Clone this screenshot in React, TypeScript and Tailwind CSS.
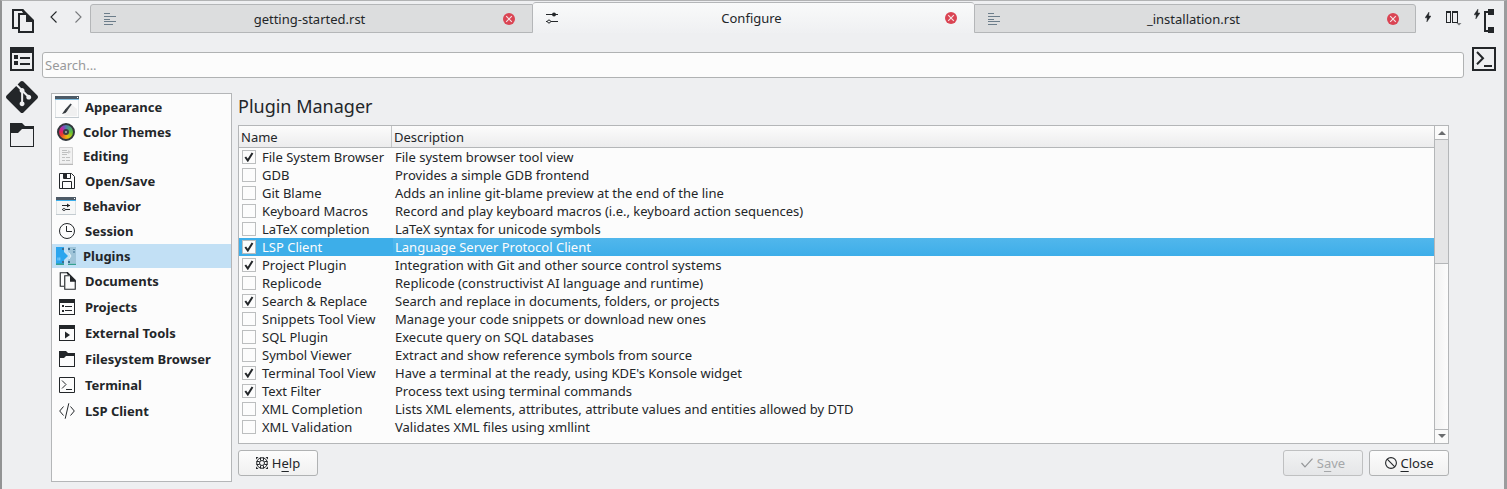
import type { ReactNode } from "react";
import { SiGit } from "react-icons/si";

const INK = "#232629";

function DocsIcon({ size, thin }: { size: number; thin?: boolean }) {
  const w = thin ? 1.5 : 2;
  return (
    <svg width={size} height={size} viewBox="0 0 24 24" fill="none" stroke={INK} strokeWidth={w}>
      <path d="M8 19H3V1H12.5L14 3" />
      <path d="M11 0h2l4 4h-4z" fill={INK} stroke="none" />
      <path d="M17 5H9V23H23V12" />
      <path d="M16 4h1l7 7v2h-8z" fill={INK} stroke="none" />
    </svg>
  );
}

function ListIcon() {
  return (
    <svg width="24" height="24" viewBox="0 0 24 24" fill={INK} shapeRendering="crispEdges">
      <path d="M0 0h24v24H0zM2 6v16h20V6z" fillRule="evenodd" />
      <path d="M4 8h4v4H4zM10 10h10v2H10zM4 14h4v4H4zM10 16h10v2H10z" />
    </svg>
  );
}

function FolderIcon() {
  return (
    <svg width="24" height="24" viewBox="0 0 24 24" fill={INK}>
      <path d="M0 0h12l3 3h9v21H0zM1 10v13h22V6H12l-4 4z" fillRule="evenodd" />
    </svg>
  );
}

function Bolt() {
  return (
    <svg width="6" height="10" viewBox="0 0 6 10" fill={INK}>
      <path d="M4 0L0 5.8h2.2L1.8 10L6 4H3.800z" stroke={INK} strokeWidth=".4" />
    </svg>
  );
}

function TreeIcon() {
  return (
    <svg width="10" height="24" viewBox="0 0 10 24" fill={INK} shapeRendering="crispEdges">
      <path d="M4 0h6v6H4zM4 18h6v6H4zM0 2h4v2H2v17h2v2H0z" />
    </svg>
  );
}

function TermIcon() {
  return (
    <svg width="24" height="24" viewBox="0 0 24 24" fill="none" stroke={INK} strokeWidth="2">
      <rect x="1" y="1" width="22" height="22" />
      <path d="M5 5l6 6.3L5 17.2" />
      <path d="M12 19h8" />
    </svg>
  );
}

function TextIcon() {
  return (
    <svg width="12" height="12" viewBox="0 0 12 12" fill="#6c7d8a" shapeRendering="crispEdges">
      <path d="M0 0h6v1H0zM0 3h12v1H0zM0 6h6v1H0zM0 8h12v1H0zM0 11h9v1H0z" />
    </svg>
  );
}

function SlidersIcon() {
  return (
    <svg width="12" height="12" viewBox="0 0 12 12" fill="none" stroke={INK}>
      <path d="M0 2.5h12M5 9.5h7M0 9.5h1" />
      <circle cx="8" cy="2.5" r="2" fill={INK} stroke="none" />
      <circle cx="3" cy="9.5" r="1.5" />
    </svg>
  );
}

function CloseDot() {
  return (
    <svg width="12" height="12" viewBox="0 0 12 12">
      <circle cx="6" cy="6" r="6" fill="#da4453" />
      <path d="M3.2 3.2l5.6 5.6M8.8 3.2l-5.6 5.6" stroke="#f6e4e6" strokeWidth="1.1" />
    </svg>
  );
}

function Tab({ label, active, className }: { label: string; active?: boolean; className: string }) {
  return (
    <div className={`flex items-center ${className}`}>
      {active ? <SlidersIcon /> : <TextIcon />}
      <span className="flex-1 text-center">{label}</span>
      <CloseDot />
    </div>
  );
}

const appearance = (
  <svg width="24" height="22" viewBox="0 0 24 22">
    <path d="M0 1h24v21H0z" fill="#c3cbd0" />
    <path d="M.5 3h23v18H.5z" fill="#fbfbfb" />
    <path d="M0 0h24v3H0z" fill="#4d5a66" />
    <path d="M0 3h24v1H0z" fill="#7fbde0" />
    <path d="M22 1h1v1h-1z" fill="#fff" />
    <path d="M10 18l7-9 5 4v7H9z" fill="#f0f0f0" />
    <path d="M15.500 7.500l1.300 1-4.800 6.500-1.900-1.400z" fill="#3a4045" />
    <path d="M10.500 13l2 1.700-2 2.200-3.500 1z" fill="#33383c" />
  </svg>
);

const editing = (
  <svg width="14" height="18" viewBox="0 0 14 18">
    <path d="M.5.5h13v16.500H.5z" fill="#f1f1f1" stroke="#d2d2d2" />
    <path d="M0 17h14v1H0z" fill="#b9b9b9" />
    <path d="M3 3.500h5M3 5.500h6M3 7.500h5M3 10.500h3M7 10.500h4M3 13.500h3M7 13.500h4" stroke="#bfc0c0" />
    <path d="M9 3l3 2-3 2z" fill="#cfcfcf" />
  </svg>
);

const save = (
  <svg width="16" height="16" viewBox="0 0 16 16" fill="none" stroke={INK}>
    <path d="M.5.5h12l3 3v12H.5z" />
    <path d="M3.500 15.500v-7h9v7" />
    <path d="M4.500 0v5.500h7V0" />
    <path d="M5 1h3v4H5z" fill={INK} stroke="none" />
  </svg>
);

const behavior = (
  <svg width="20" height="18" viewBox="0 0 20 18">
    <path d="M0 0h20v18H0z" fill="#c3cbd0" />
    <path d="M.5 3h19v14H.5z" fill="#f6f7f7" />
    <path d="M0 0h20v3H0z" fill="#4d5a66" />
    <path d="M0 3h20v1H0z" fill="#3daee9" />
    <path d="M18 1h1v1h-1z" fill="#fff" />
    <path d="M6 8.500h8M6 12.500h8" stroke={INK} />
    <path d="M11 6.500l3 2-3 2z" fill={INK} />
    <circle cx="8" cy="12.500" r="1.200" fill="#f6f7f7" stroke={INK} strokeWidth=".8" />
  </svg>
);

const session = (
  <svg width="16" height="16" viewBox="0 0 16 16" fill="none" stroke={INK}>
    <circle cx="8" cy="8" r="7.500" />
    <path d="M7.500 3v5.500H13" />
  </svg>
);

const plugins = (
  <svg width="20" height="18" viewBox="0 0 20 18">
    <path d="M0 0h8v5l4 4-4 4v5H0z" fill="#2ba5ee" />
    <path d="M0 16.500h8V18H0zM12 16.500h8V18h-8z" fill="#35a08f" />
    <path d="M20 0h-8v4l3 5-3 4v3.500h8z" fill="#9fc4d8" />
    <path d="M6 1h2v2H6zM6 14h2v2H6zM12 1h2v2h-2zM12 14h2v2h-2zM17 2h2v1h-2zM17 4.500h2v1h-2z" fill="#3b6f92" />
    <path d="M2 10.500v3M3.800 10.500v3" stroke="#a5dcff" strokeWidth=".8" />
    <path d="M13 6l2 3-2 3" stroke="#e4f2fa" fill="none" />
  </svg>
);

const projects = (
  <svg width="16" height="16" viewBox="0 0 16 16" fill={INK} shapeRendering="crispEdges">
    <path d="M0 0h16v16H0zM1 4v11h14V4z" fillRule="evenodd" />
    <path d="M3 6h2v2H3zM6 7h7v1H6zM3 11h2v2H3zM6 11h7v1H6z" />
  </svg>
);

const tools = (
  <svg width="16" height="16" viewBox="0 0 16 16" fill={INK}>
    <path d="M0 0h16v16H0zM1 4v11h14V4z" fillRule="evenodd" />
    <path d="M6 6.500l5 3.500-5 3.500z" />
  </svg>
);

const folder = (
  <svg width="16" height="16" viewBox="0 0 16 16" fill={INK}>
    <path d="M0 0h7l2 2h7v14H0zM1 7v8h14V5H7L5 7z" fillRule="evenodd" />
  </svg>
);

const terminal = (
  <svg width="16" height="16" viewBox="0 0 16 16" fill="none" stroke={INK}>
    <path d="M.5.5h15v15H.5zM3 3.500l4 4-4 4M7 12.500h6" />
  </svg>
);

const code = (
  <svg width="16" height="16" viewBox="0 0 16 16" fill="none" stroke={INK}>
    <path d="M4.500 3.500L.7 8l3.800 4.500M11.500 3.500L15.300 8l-3.800 4.500M9.800 .3L6.200 15.700" />
  </svg>
);

const wheel = (
  <span className="flex size-[18px] items-center justify-center rounded-full border-2 border-[#31363b] bg-[conic-gradient(#4f7fa8,#4aa07c_12%,#5fbf3c_25%,#a9c81e_36%,#e8c010_45%,#f08a1c_55%,#e8402c_65%,#e0205c_76%,#c02a9c_86%,#7b4fc0_94%,#4f7fa8)]">
    <span className="size-[6px] rounded-full border-2 border-[#3a3f44] bg-[#b0b4b8]" />
  </span>
);

const sidebar: { label: string; icon: ReactNode; small?: boolean; selected?: boolean }[] = [
  { label: "Appearance", icon: appearance },
  { label: "Color Themes", icon: wheel, small: true },
  { label: "Editing", icon: editing, small: true },
  { label: "Open/Save", icon: save },
  { label: "Behavior", icon: behavior, small: true },
  { label: "Session", icon: session },
  { label: "Plugins", icon: plugins, small: true, selected: true },
  { label: "Documents", icon: <DocsIcon size={18} thin /> },
  { label: "Projects", icon: projects },
  { label: "External Tools", icon: tools },
  { label: "Filesystem Browser", icon: folder },
  { label: "Terminal", icon: terminal },
  { label: "LSP Client", icon: code },
];

const rows: [boolean, string, string][] = [
  [true, "File System Browser", "File system browser tool view"],
  [false, "GDB", "Provides a simple GDB frontend"],
  [false, "Git Blame", "Adds an inline git-blame preview at the end of the line"],
  [false, "Keyboard Macros", "Record and play keyboard macros (i.e., keyboard action sequences)"],
  [false, "LaTeX completion", "LaTeX syntax for unicode symbols"],
  [true, "LSP Client", "Language Server Protocol Client"],
  [true, "Project Plugin", "Integration with Git and other source control systems"],
  [false, "Replicode", "Replicode (constructivist AI language and runtime)"],
  [true, "Search & Replace", "Search and replace in documents, folders, or projects"],
  [false, "Snippets Tool View", "Manage your code snippets or download new ones"],
  [false, "SQL Plugin", "Execute query on SQL databases"],
  [false, "Symbol Viewer", "Extract and show reference symbols from source"],
  [true, "Terminal Tool View", "Have a terminal at the ready, using KDE's Konsole widget"],
  [true, "Text Filter", "Process text using terminal commands"],
  [false, "XML Completion", "Lists XML elements, attributes, attribute values and entities allowed by DTD"],
  [false, "XML Validation", "Validates XML files using xmllint"],
];

function Row({ checked, name, desc, selected }: { checked: boolean; name: string; desc: string; selected: boolean }) {
  return (
    <div className={`flex h-[18px] items-center leading-[18px] ${selected ? "text-[#fcfcfc]" : ""}`}>
      <div className={`flex h-full w-[154px] shrink-0 items-center pl-[3px] ${selected ? "bg-[#3daee9]" : ""}`}>
        <span className="mr-[6px] flex size-[14px] items-center justify-center border border-[#bcbebf] bg-[#fcfcfc]">
          {checked && (
            <svg width="10" height="10" viewBox="0 0 10 10" fill="none" stroke={INK} strokeWidth="2">
              <path d="M1.300 5l2.500 3.500L8.500 1" />
            </svg>
          )}
        </span>
        {name}
      </div>
      <div className={`h-full flex-1 pl-[2px] ${selected ? "bg-linear-to-b from-[#51b7ec] to-[#3daee9]" : ""}`}>{desc}</div>
    </div>
  );
}

function Button({ icon, children, disabled }: { icon: ReactNode; children: ReactNode; disabled?: boolean }) {
  return (
    <div
      className={`flex h-[26px] w-20 items-center justify-center gap-1 rounded-[3px] border ${
        disabled
          ? "border-[#bfc0c1] bg-linear-to-b from-[#f1f2f3] to-[#e5e6e8] text-[#a5a7a9]"
          : "border-[#b0b2b3] bg-linear-to-b from-[#fcfcfc] to-[#f0f0f0]"
      }`}
    >
      {icon}
      <span>{children}</span>
    </div>
  );
}

function Key({ children }: { children: ReactNode }) {
  return <span className="underline decoration-1 underline-offset-[3px] [text-decoration-skip-ink:none]">{children}</span>;
}

export default function App() {
  return (
    <div className="flex h-[489px] w-[1507px] overflow-hidden border-t border-l-2 border-r-3 border-t-[#b2b3b4] border-r-[#9b9c9d] border-l-[#929394] bg-[#eeeff1] font-['Noto_Sans',sans-serif] text-[13px] leading-[18px] text-[#232629]">
      <div className="flex w-10 shrink-0 flex-col items-center pt-2">
        <DocsIcon size={24} />
        <div className="mt-[14px]"><ListIcon /></div>
        <SiGit className="mt-[10px]" size={32} color={INK} />
        <div className="mt-[10px]"><FolderIcon /></div>
      </div>

      <div className="flex w-[1422px] shrink-0 flex-col">
        <div className="flex h-8 items-end">
          <div className="flex h-8 w-12 items-center gap-[18px] pl-2">
            <svg width="7" height="12" viewBox="0 0 7 12" fill="none" stroke={INK} strokeWidth="1.100"><path d="M6.500.5L1 6l5.500 5.500" /></svg>
            <svg width="7" height="12" viewBox="0 0 7 12" fill="none" stroke="#77797c" strokeWidth="1.100"><path d="M.5.5L6 6 .5 11.500" /></svg>
          </div>
          <Tab label="getting-started.rst" className="h-[29px] w-[443px] rounded-tl-[3px] border border-[#b4b6b8] bg-[#dcddde] pr-[17px] pl-[13px]" />
          <Tab label="Configure" active className="h-[31px] w-[441px] rounded-t-[3px] border-t border-[#b4b6b8] bg-linear-to-b from-[#f9fafa] to-[#eff0f2] pr-[17px] pl-[13px]" />
          <Tab label="_installation.rst" className="h-[29px] w-[442px] rounded-tr-[3px] border border-[#b4b6b8] bg-[#dcddde] pr-4 pl-[13px]" />
          <div className="flex h-8 flex-1 items-start pt-[11px] pl-[9px]">
            <Bolt />
            <svg className="mt-[-1px] ml-[15px]" width="16" height="15" viewBox="0 0 16 15" fill={INK}>
              <path d="M0 0h5v12H0zM1 2v9h3V2zM6 0h6v12H6zM7 2v9h4V2z" fillRule="evenodd" />
              <path d="M10.500 12h5l-2.500 2.500z" fill="#77797c" />
            </svg>
          </div>
        </div>

        <div className="mt-[19px] flex h-[26px] items-center rounded-[3px] border border-[#b0b2b3] bg-[#fcfcfc] pl-[2px] text-[#98999b]">Search...</div>

        <div className="mt-[15px] flex pl-[9px]">
          <div className="h-[389px] w-[181px] border border-[#b4b6b8] bg-[#fcfcfc]">
            {sidebar.map((s) => (
              <div
                key={s.label}
                className={`flex items-center gap-[6px] pl-[3px] font-bold ${s.small ? "h-6" : "h-[26px]"} ${s.selected ? "bg-[#c2e0f5]" : ""}`}
              >
                <span className={`flex shrink-0 items-center justify-center ${s.small ? "w-[22px]" : "w-6"}`}>{s.icon}</span>
                {s.label}
              </div>
            ))}
          </div>

          <div className="ml-[6px] flex w-[1211px] flex-col">
            <div className="h-8 text-[18px] leading-[26px]">Plugin Manager</div>
            <div className="flex h-[319px] border border-[#b4b6b8] bg-[#fcfcfc]">
              <div className="flex flex-1 flex-col">
                <div className="flex h-[22px] items-center border-b border-[#b4b6b8] bg-linear-to-b from-[#fcfcfc] to-[#ececed]">
                  <div className="flex h-full w-[153px] items-center border-r border-[#c4c6c7] pl-[2px]">Name</div>
                  <div className="pl-[2px]">Description</div>
                </div>
                {rows.map(([checked, name, desc]) => (
                  <Row key={name} checked={checked} name={name} desc={desc} selected={name === "LSP Client"} />
                ))}
              </div>
              <div className="flex w-[14px] flex-col border-l border-[#b4b6b8] bg-linear-to-r from-[#f2f2f2] to-[#fcfcfc]">
                <div className="flex h-[13px] items-center justify-center bg-[#fafafa]">
                  <svg width="8" height="4" viewBox="0 0 8 4" fill="#6a6c6e"><path d="M0 4l4-4 4 4z" /></svg>
                </div>
                <div className="h-[125px] border-y border-[#b4b6b8] bg-[#e5e5e6]" />
                <div className="flex-1" />
                <div className="flex h-[14px] items-start justify-center border-t border-[#b4b6b8] bg-[#fafafa] pt-[4px]">
                  <svg width="8" height="4" viewBox="0 0 8 4" fill="#6a6c6e"><path d="M0 0l4 4 4-4z" /></svg>
                </div>
              </div>
            </div>
            <div className="mt-[6px] flex gap-[6px]">
              <Button
                icon={
                  <svg width="12" height="12" viewBox="0 0 12 12" fill="none" stroke={INK}>
                    <circle cx="6" cy="6" r="5.300" />
                    <circle cx="6" cy="6" r="2.500" />
                    <path d="M4.500 .5v3M7.500 .5v3M4.500 8.500v3M7.500 8.500v3M.5 4.500h3M.5 7.500h3M8.500 4.500h3M8.500 7.500h3" />
                    <path d="M0 0h2.500L0 2.500zM12 0H9.500L12 2.500zM0 12h2.500L0 9.500zM12 12H9.500L12 9.500z" fill={INK} stroke="none" />
                  </svg>
                }
              >
                H<Key>e</Key>lp
              </Button>
              <div className="flex-1" />
              <Button
                disabled
                icon={
                  <svg width="12" height="10" viewBox="0 0 12 10" fill="none" stroke="#949698" strokeWidth="1.200"><path d="M.5 5l3.500 3.800L11.500.7" /></svg>
                }
              >
                S<Key>a</Key>ve
              </Button>
              <Button
                icon={
                  <svg width="12" height="12" viewBox="0 0 12 12" fill="none" stroke={INK} strokeWidth="1.100"><circle cx="6" cy="6" r="5.400" /><path d="M2.200 2.200l7.600 7.600" /></svg>
                }
              >
                <Key>C</Key>lose
              </Button>
            </div>
          </div>
        </div>
      </div>

      <div className="flex flex-1 flex-col pt-2 pl-2">
        <div className="flex gap-1 pl-[2px]">
          <Bolt />
          <TreeIcon />
        </div>
        <div className="mt-[14px]"><TermIcon /></div>
      </div>
    </div>
  );
}
